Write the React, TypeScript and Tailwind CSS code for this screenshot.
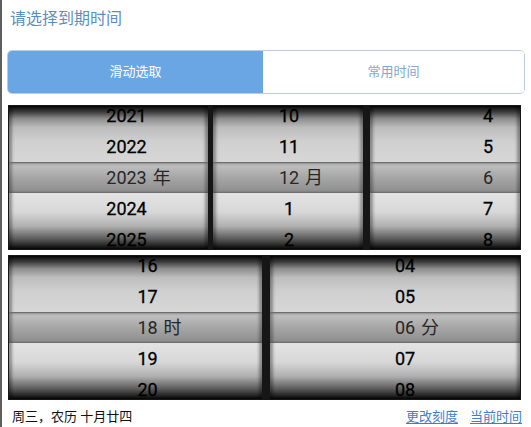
import React from "react";

type Col = { w: string; pl: string; items: string[]; label: string };

const colBg =
  "bg-[linear-gradient(to_bottom,#080808_0%,#3a3a3a_4%,#8e8e8e_9%,#bdbdbd_15%,#d0d0d0_25%,#d6d6d6_38%,#e2e2e2_62%,#d8d8d8_74%,#b0b0b0_84%,#5a5a5a_93%,#080808_100%)]";

function Column({ c }: { c: Col }) {
  return (
    <div
      className={`relative h-[143px] overflow-hidden ${c.w} ${colBg} shadow-[inset_3px_0_3px_rgba(0,0,0,0.35),inset_-3px_0_3px_rgba(0,0,0,0.35)]`}
    >
      <div className="absolute left-0 right-0 top-[56px] h-[31px] border-t border-[#6e6e6e] bg-[linear-gradient(to_bottom,#c4c4c4_0%,#a8a8a8_45%,#8c8c8c_100%)] shadow-[inset_3px_0_3px_rgba(0,0,0,0.3),inset_-3px_0_3px_rgba(0,0,0,0.3)]" />
      <div className="relative -mt-[6px] flex flex-col">
        {c.items.map((t, i) => (
          <div key={i} className={`flex h-[31px] items-center justify-center ${c.pl}`}>
            <span
              className={`relative text-[18px] leading-none font-normal ${
                i === 2 ? "text-[#262626]" : "text-black [-webkit-text-stroke:0.3px_#000]"
              }`}
            >
              {t}
              {i === 2 && (
                <span className="absolute left-full top-0 ml-[6px] whitespace-nowrap">
                  {c.label}
                </span>
              )}
            </span>
          </div>
        ))}
      </div>
    </div>
  );
}

export default function App() {
  const font = { fontFamily: 'Roboto, "Noto Sans CJK SC", sans-serif' };
  const cols1: Col[] = [
    { w: "w-[199px]", pl: "pl-[36px]", items: ["2021", "2022", "2023", "2024", "2025"], label: "年" },
    { w: "w-[150px]", pl: "pl-[2px]", items: ["10", "11", "12", "1", "2"], label: "月" },
    { w: "w-[150px]", pl: "pl-[86px]", items: ["4", "5", "6", "7", "8"], label: "" },
  ];
  const cols2: Col[] = [
    { w: "w-[253px]", pl: "pl-[24px]", items: ["16", "17", "18", "19", "20"], label: "时" },
    { w: "w-[250px]", pl: "pl-[20px]", items: ["04", "05", "06", "07", "08"], label: "分" },
  ];
  return (
    <div
      className="relative h-[427px] w-[531px] overflow-hidden border-l-2 border-[#5e5e5e] bg-white"
      style={font}
    >
      <div className="pl-[8px] pt-[8px] text-[16px] leading-[22px] text-[#5a8ec2]">请选择到期时间</div>
      <div className="ml-[5px] mt-[20px] flex h-[44px] w-[518px] overflow-hidden rounded-[5px] border border-[#b9cbdc]">
        <div className="flex w-[255px] items-center justify-center bg-[#6aa6e4] text-[13px] text-white">
          滑动选取
        </div>
        <div className="flex flex-1 items-center justify-center bg-white text-[13px] text-[#7fa7cf]">
          常用时间
        </div>
      </div>
      <div className="ml-[6px] mt-[11px] flex h-[145px] w-[513px] gap-[5px] bg-[#161616] p-[1px]">
        <Column c={cols1[0]} />
        <Column c={cols1[1]} />
        <div className="ml-[2px]">
          <Column c={cols1[2]} />
        </div>
      </div>
      <div className="ml-[6px] mt-[5px] flex h-[145px] w-[513px] gap-[8px] bg-[#161616] p-[1px]">
        <Column c={cols2[0]} />
        <Column c={cols2[1]} />
      </div>
      <div className="mt-[8px] flex items-center justify-between pl-[10px] pr-[9px] text-[13px] leading-[18px]">
        <span className="text-[#111]">周三，农历 十月廿四</span>
        <div className="flex gap-[12px] text-[#3d7dcc]">
          <span className="underline underline-offset-2">更改刻度</span>
          <span className="underline underline-offset-2">当前时间</span>
        </div>
      </div>
    </div>
  );
}
